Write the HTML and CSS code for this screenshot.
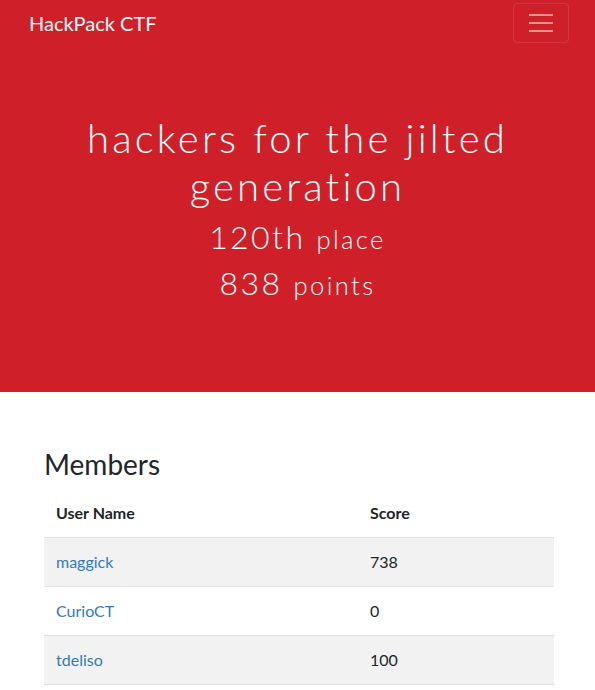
FILE: index.html
```html
<!DOCTYPE html>
<html lang="en">
<head>
<meta charset="utf-8">
<title>HackPack CTF</title>
<link rel="stylesheet" href="styles.css">
</head>
<body>
<header class="masthead">
  <nav class="navbar">
    <a class="brand" href="#">HackPack CTF</a>
    <button class="toggler" type="button" aria-label="Toggle navigation">
      <svg class="toggler-icon" viewBox="0 0 30 30" width="30" height="30">
        <path d="M3 7h24M3 15h24M3 23h24" stroke="rgba(255,255,255,0.5)" stroke-width="2" stroke-linecap="butt" fill="none"/>
      </svg>
    </button>
  </nav>
  <div class="hero">
    <h1 class="team">hackers for the jilted generation</h1>
    <h2 class="stat">120th <small>place</small></h2>
    <h2 class="stat">838 <small>points</small></h2>
  </div>
</header>
<main class="content">
  <h3 class="section-title">Members</h3>
  <table class="members">
    <colgroup><col class="col-name"><col class="col-score"></colgroup>
    <thead>
      <tr><th>User Name</th><th>Score</th></tr>
    </thead>
    <tbody>
      <tr class="striped"><td><a href="#">maggick</a></td><td>738</td></tr>
      <tr><td><a href="#">CurioCT</a></td><td>0</td></tr>
      <tr class="striped"><td><a href="#">tdeliso</a></td><td>100</td></tr>
    </tbody>
  </table>
</main>
</body>
</html>
```
FILE: styles.css
```css
* { box-sizing: border-box; }
html, body { margin: 0; padding: 0; }
body {
  font-family: Lato, "Liberation Sans", sans-serif;
  font-size: 16px;
  line-height: 1.5;
  color: #212529;
  background: #fff;
}
.masthead {
  background: #cf2029;
  color: #fff;
  height: 392px;
}
.navbar {
  display: flex;
  align-items: center;
  justify-content: space-between;
  padding: 3px 26px 3px 29px;
}
.brand {
  color: #fff;
  text-decoration: none;
  font-size: 20px;
  line-height: 30px;
}
.toggler {
  width: 56px;
  height: 40px;
  padding: 4px 12px;
  background: transparent;
  border: 1px solid rgba(255,255,255,0.1);
  border-radius: 4px;
  display: flex;
  align-items: center;
  justify-content: center;
}
.toggler-icon { display: block; }
.hero {
  text-align: center;
  padding: 68px 40px 0;
}
.team {
  font-family: Lato, sans-serif;
  font-weight: 300;
  font-size: 40px;
  line-height: 1.2;
  letter-spacing: 3.2px;
  margin: 0 auto 8px;
  max-width: 510px;
}
.stat {
  font-family: Lato, sans-serif;
  font-weight: 300;
  font-size: 32px;
  line-height: 1.2;
  letter-spacing: 2.4px;
  margin: 0 0 8px;
}
.stat small { font-size: 80%; }
.content {
  padding: 56px 0 0 44px;
  width: 554px;
}
.section-title {
  font-size: 28px;
  font-weight: 400;
  line-height: 1.2;
  margin: 0 0 7px;
}
.members {
  width: 510px;
  border-collapse: collapse;
  table-layout: fixed;
}
.col-name { width: 314px; }
.members th, .members td {
  padding: 12px;
  text-align: left;
  vertical-align: top;
}
.members th { font-weight: 700; border-bottom: 1px solid #dee2e6; }
.members td { border-bottom: 1px solid #dee2e6; }
.members .striped td { background: #f2f2f2; }
.members a { color: #337ab7; text-decoration: none; }
```
